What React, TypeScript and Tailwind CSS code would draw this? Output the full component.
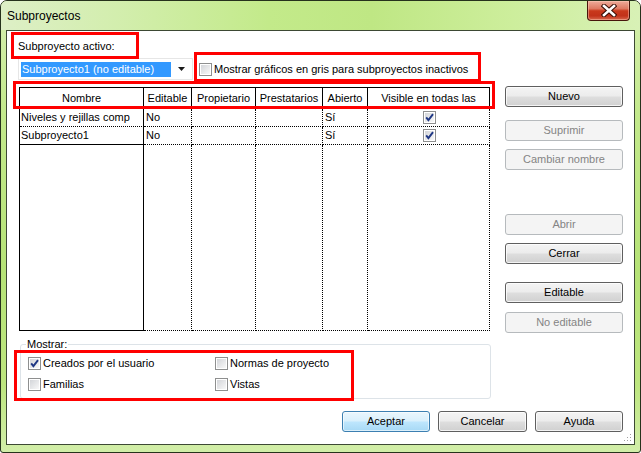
import React from 'react';

interface BtnProps {
  label: string;
  disabled?: boolean;
  primary?: boolean;
  className?: string;
}

const WinButton: React.FC<BtnProps> = ({ label, disabled, primary, className = '' }) => {
  let look =
    'border-[#5f5f5f] bg-[linear-gradient(180deg,#f4f4f4_0%,#ececec_48%,#dedede_52%,#d0d0d0_100%)] text-black shadow-[inset_0_0_0_1px_rgba(255,255,255,0.75)]';
  if (disabled) look = 'border-[#b6babd] bg-[#f4f4f4] text-[#848484]';
  if (primary)
    look =
      'border-[#3c7fb1] bg-[linear-gradient(180deg,#eaf6fd_0%,#d9f0fc_48%,#bee6fd_52%,#a7d9f5_100%)] text-black shadow-[inset_0_0_0_1px_rgba(255,255,255,0.6)]';
  return (
    <button
      className={`h-[21px] rounded-[3px] border ${look} text-[11px] leading-none flex items-center justify-center ${className}`}
    >
      {label}
    </button>
  );
};

const CheckBox: React.FC<{ checked?: boolean }> = ({ checked }) => (
  <div className="relative w-[13px] h-[13px] shrink-0 border border-[#8e8f8f] bg-white p-[1px]">
    <div className="w-full h-full bg-linear-to-br from-[#d3d5d9] to-[#f8f8f8]" />
    {checked && (
      <svg className="absolute left-0 top-0" width="11" height="11" viewBox="0 0 11 11">
        <path d="M2.2 5.4 L4.4 8.2 L9 2.2" fill="none" stroke="#1f3784" strokeWidth="1.9" />
      </svg>
    )}
  </div>
);

const CheckLabel: React.FC<{ checked?: boolean; label: string }> = ({ checked, label }) => (
  <div className="flex items-center gap-[2px] h-[13px]">
    <CheckBox checked={checked} />
    <span className="text-[11px] leading-[13px]">{label}</span>
  </div>
);

const rows = [
  { nombre: 'Niveles y rejillas comp', editable: 'No', abierto: 'Sí', visible: true, focus: true },
  { nombre: 'Subproyecto1', editable: 'No', abierto: 'Sí', visible: true, focus: false },
];

const headCell = 'border-r border-b border-black flex items-center justify-center overflow-hidden whitespace-nowrap text-[11px]';
const bodyCell = 'border-r border-b border-black [border-right-style:dotted] [border-bottom-style:dotted] flex items-center pl-[2px] text-[11px] overflow-hidden whitespace-nowrap';

const ProjectTable: React.FC = () => (
  <div className="mt-[1px] w-[471px] h-[244px] border-l border-t border-black bg-white grid grid-cols-[124px_48px_64px_67px_45px_122px] grid-rows-[21px_18px_18px_186px]">
    <div className={headCell}>Nombre</div>
    <div className={headCell}>Editable</div>
    <div className={headCell}>Propietario</div>
    <div className={headCell}>Prestatarios</div>
    <div className={headCell}>Abierto</div>
    <div className={headCell}>Visible en todas las</div>

    {rows.map((r) => (
      <React.Fragment key={r.nombre}>
        <div
          className={`border-r border-b border-black flex items-center pl-[1px] text-[11px] overflow-hidden whitespace-nowrap ${
            r.focus ? '[border-bottom-style:dotted]' : ''
          }`}
        >
          {r.nombre}
        </div>
        <div className={bodyCell}>{r.editable}</div>
        <div className={bodyCell}></div>
        <div className={bodyCell}></div>
        <div className={bodyCell}>{r.abierto}</div>
        <div className={`${bodyCell} justify-center pl-0 pr-[1px]`}>
          <CheckBox checked={r.visible} />
        </div>
      </React.Fragment>
    ))}

    {/* empty filler row */}
    <div className="border-r border-b border-black" />
    <div className={bodyCell} />
    <div className={bodyCell} />
    <div className={bodyCell} />
    <div className={bodyCell} />
    <div className={bodyCell} />
  </div>
);

export default function App() {
  return (
    <div className="font-['Liberation_Sans',Arial,sans-serif] text-black">
      <div className="w-[641px] h-[453px] overflow-hidden rounded-t-[7px] rounded-b-[3px] border border-[#26321c] bg-[linear-gradient(180deg,#d6efb0_0%,#c3e98c_25%,#b6e377_60%,#bde67f_85%,#d2eea9_100%)]">
        {/* Title bar */}
        <div className="h-[29px] flex justify-between bg-[linear-gradient(90deg,#ddefc6_0%,#d3eeae_18%,#c3ea8a_42%,#bfe784_58%,#cdee9c_80%,#d8f1b6_100%)]">
          <div className="pl-[6px] flex items-center text-[12px]">Subproyectos</div>
          <div className="mr-[10px] w-[43px] h-[20px] rounded-b-[4px] border border-t-0 border-[#47150b] bg-[linear-gradient(180deg,#eeab9a_0%,#de7a63_40%,#c9391c_52%,#c2321a_78%,#d8674c_100%)] shadow-[inset_0_0_0_1px_rgba(255,210,190,0.45)] flex items-center justify-center">
            <svg width="16" height="13" viewBox="0 0 16 13">
              <path d="M3 2 L13 11 M13 2 L3 11" stroke="#3a0f06" strokeWidth="4.6" strokeLinecap="square" />
              <path d="M3 2 L13 11 M13 2 L3 11" stroke="#ffffff" strokeWidth="2.6" strokeLinecap="square" />
            </svg>
          </div>
        </div>

        {/* Client area */}
        <div className="relative ml-[5px] w-[629px] h-[415px] border border-[#3d4934] bg-white flex flex-col">
          <div className="mt-[9px] ml-[11px] h-[13px] leading-[13px] text-[11px]">Subproyecto activo:</div>

          <div className="mt-[5px] ml-[11px] h-[22px] flex items-center">
            <div className="w-[175px] h-[22px] border border-[#e6e6e6] flex items-center pl-[2px]">
              <div className="w-[150px] h-[15px] bg-[#3399ff] text-white text-[11px] leading-[15px] pl-[1px] whitespace-nowrap">
                Subproyecto1 (no editable)
              </div>
              <svg className="ml-[7px]" width="8" height="5" viewBox="0 0 8 5">
                <path d="M0 0 H7 L3.5 4 Z" fill="#1a1a1a" />
              </svg>
            </div>
            <div className="ml-[6px]">
              <CheckLabel label="Mostrar gráficos en gris para subproyectos inactivos" />
            </div>
          </div>

          <div className="mt-[6px] ml-[12px] h-[247px] flex gap-[15px]">
            <ProjectTable />
            <div className="w-[118px] flex flex-col">
              <WinButton label="Nuevo" />
              <WinButton label="Suprimir" disabled className="mt-[13px]" />
              <WinButton label="Cambiar nombre" disabled className="mt-[8px]" />
              <WinButton label="Abrir" disabled className="mt-[44px]" />
              <WinButton label="Cerrar" className="mt-[8px]" />
              <WinButton label="Editable" className="mt-[18px]" />
              <WinButton label="No editable" disabled className="mt-[9px]" />
            </div>
          </div>

          <fieldset className="mt-[5px] ml-[13px] w-[471px] h-[61px] border border-[#dde3e8] rounded-[3px] pl-[7px] pt-[6px]">
            <legend className="text-[11px] leading-[13px] px-[1px] -ml-[2px]">Mostrar:</legend>
            <div className="grid grid-cols-[187px_auto] gap-y-[8px]">
              <CheckLabel checked label="Creados por el usuario" />
              <CheckLabel label="Normas de proyecto" />
              <CheckLabel label="Familias" />
              <CheckLabel label="Vistas" />
            </div>
          </fieldset>

          <div className="mt-[12px] pr-[11px] flex justify-end gap-[8px]">
            <WinButton label="Aceptar" primary className="w-[88px]" />
            <WinButton label="Cancelar" className="w-[89px]" />
            <WinButton label="Ayuda" className="w-[88px]" />
          </div>

          {/* resize grip */}
          <svg className="absolute right-[2px] bottom-[2px]" width="9" height="9" viewBox="0 0 9 9">
            <rect x="7" y="1" width="1" height="1" fill="#a0a0a0" />
            <rect x="4" y="4" width="1" height="1" fill="#a0a0a0" />
            <rect x="7" y="4" width="1" height="1" fill="#a0a0a0" />
            <rect x="1" y="7" width="1" height="1" fill="#a0a0a0" />
            <rect x="4" y="7" width="1" height="1" fill="#a0a0a0" />
            <rect x="7" y="7" width="1" height="1" fill="#a0a0a0" />
          </svg>

          {/* red annotation boxes drawn over the dialog */}
          <div className="absolute left-[4px] top-[1px] w-[128px] h-[27px] border-[3px] border-[#ff0000]" />
          <div className="absolute left-[187px] top-[21px] w-[287px] h-[30px] border-[3px] border-[#ff0000]" />
          <div className="absolute left-[6px] top-[50px] w-[482px] h-[28px] border-[3px] border-[#ff0000]" />
          <div className="absolute left-[7px] top-[319px] w-[340px] h-[51px] border-[3px] border-[#ff0000]" />
        </div>
      </div>
    </div>
  );
}
